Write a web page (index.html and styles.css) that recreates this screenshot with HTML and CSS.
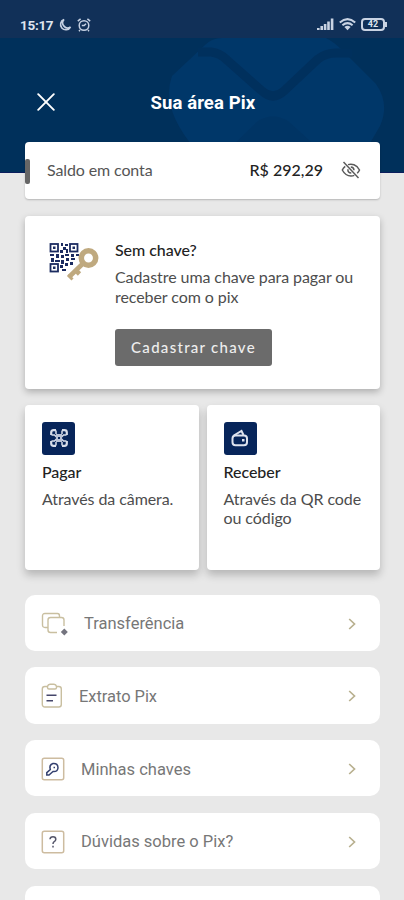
FILE: index.html
```html
<!DOCTYPE html>
<html lang="pt-BR">
    <head>
        <meta charset="utf-8">
        <title>Sua área Pix</title>
        <link rel="stylesheet" href="styles.css">
    </head>
    <body>
        <div class="top">
            <svg class="marca" width="404" height="150" viewBox="0 0 404 150">
                <path d="M172 76 L205 45 Q212 38 222 38 H326 Q334 42 342 50 L352 60 L376 84 Q390 104 380 126 L366 150 H196 Q160 108 172 76Z" fill="#003769"/>
                <path d="M198 52 H211 Q220 53 227 60 L262 91 Q273 101 284 91 L318 59 Q326 53 336 53 H352" fill="none" stroke="#00305d" stroke-width="9"/>
                <path d="M228 150 L258 121 Q273 112 288 121 L320 150Z" fill="#003464"/>
            </svg>
            <div class="status">
                <span class="hora">15:17</span>
                <svg width="14" height="14" viewBox="0 0 14 14" fill="none" stroke="#c5d0e2" stroke-width="1.6">
                    <path d="M6 1.5 A5.3 5.3 0 1 0 12.5 9 A5 5 0 0 1 6 1.5Z"/>
                </svg>
                <svg class="alarme" width="14" height="14" viewBox="0 0 14 14" fill="none" stroke="#c5d0e2" stroke-width="1.5">
                    <circle cx="7" cy="7.5" r="4.8"/>
                    <path d="M.8 3.2 L3.6 .9 M13.2 3.2 L10.4 .9 M4.8 7.5 H7.2 L9 5.8 M3 12 L2 13.2 M11 12 L12 13.2"/>
                </svg>
                <div class="sinais">
                    <svg width="17" height="13" viewBox="0 0 17 13" fill="#c9d3e3">
                        <path d="M0 10h2.6v2H0z M3.4 8h2.6v4H3.4z M6.8 6h2.6v6H6.8z M10.2 3.5h2.6v8.5h-2.6z M13.8 .5h2.6v11.5h-2.6z"/>
                    </svg>
                    <svg width="17" height="13" viewBox="0 0 17 13" fill="none" stroke="#c9d3e3" stroke-width="2">
                        <path d="M.8 4.4 Q8.5 -2.2 16.2 4.4 M3.4 7.2 Q8.5 3 13.6 7.2"/>
                        <path d="M5.4 9 Q8.5 6.5 11.6 9 L8.5 12.3Z" fill="#c9d3e3" stroke="none"/>
                    </svg>
                    <div class="bateria">42</div>
                </div>
            </div>
            <div class="titulo">
                <svg width="18" height="18" viewBox="0 0 18 18" fill="none" stroke="#fff" stroke-width="1.9" stroke-linecap="round">
                    <path d="M1.2 1.2 L16.8 16.8 M16.8 1.2 L1.2 16.8"/>
                </svg>
                <h1>Sua área Pix</h1>
            </div>
        </div>
        <div class="content">
            <div class="card saldo">
                <span class="label">Saldo em conta</span>
                <b class="valor">R$ 292,29</b>
                <svg width="20" height="18" viewBox="0 0 20 18" fill="none" stroke="#5a5a5a" stroke-width="1.5">
                    <path d="M2.5 1 L17.5 17"/>
                    <path d="M7 3.6 Q10 2.7 13 3.7 Q16.5 5 18.5 9 Q17.8 10.8 16.2 12.3 M4.2 5.3 Q2.4 6.8 1.3 9 Q4.5 15 10 15 Q11.800 15 13.3 14.4"/>
                    <path d="M9.8 6 Q12.8 6.2 13 9.3 M6.9 8.2 Q6.6 11.8 10.3 12"/>
                </svg>
            </div>
            <div class="card chave">
                <svg width="50" height="40" viewBox="0 0 50 40">
                    <g fill="none" stroke="#1b2b60" stroke-width="1.8">
                        <rect x="1.5" y="3" width="7.500" height="7.500"/>
                        <rect x="21" y="3" width="7.500" height="7.500"/>
                        <rect x="1.500" y="23" width="7.500" height="7.500"/>
                    </g>
                    <g fill="#1b2b60">
                        <path d="M4 5.500h2.500v2.500H4z M23.500 5.500h2.500v2.500h-2.500z M4 25.500h2.500v2.500H4z"/>
                        <path d="M12 2h2v3h-2z M16 3h3v2h-3z M14 6h3v3h-3z M11 9h3v3h-3z M17 8h2v4h-2z M1 13h4v2H1z M7 13h3v4H7z M12 14h3v3h-3z M16 13h4v2h-4z M22 13h3v3h-3z M27 13h3v2h-3z M2 17h3v4H2z M6 19h5v2H6z M12 19h3v4h-3z M17 17h3v3h-3z M22 17h4v2h-4z M11 24h3v3h-3z M16 22h3v3h-3z M21 21h3v3h-3z M13 28h4v2h-4z"/>
                    </g>
                    <path d="M36 21 L20 36" stroke="#fff" stroke-width="8"/>
                    <circle cx="39.500" cy="17" r="7.200" fill="#fff" stroke="#bfa97f" stroke-width="5.500"/>
                    <path d="M35 21.500 L20 36 M26.500 29 L30.500 33" fill="none" stroke="#bfa97f" stroke-width="4.600"/>
                    <path d="M19 34 L23.500 38.500" stroke="#bfa97f" stroke-width="3"/>
                </svg>
                <div class="texto">
                    <h2>Sem chave?</h2>
                    <p>Cadastre uma chave para pagar ou<br>receber com o pix</p>
                    <button>Cadastrar chave</button>
                </div>
            </div>
            <div class="dupla">
                <div class="card opcao">
                    <div class="icone">
                        <svg width="18" height="18" viewBox="0 0 18 18" fill="none" stroke="#d9deea" stroke-width="2.200">
                            <path d="M1.200 6 V3.500 Q1.200 1.200 3.500 1.200 H6 M12 1.200 H14.500 Q16.800 1.200 16.800 3.500 V6 M16.800 12 V14.500 Q16.800 16.800 14.500 16.800 H12 M6 16.800 H3.500 Q1.200 16.800 1.200 14.500 V12"/>
                            <path d="M1.500 6 H4.500 L6.500 8 M16.500 6 H13.500 L11.500 8 M1.500 12 H4.500 L6.500 10 M16.500 12 H13.500 L11.500 10 M6 1.500 V5 M12 1.500 V5 M6 16.500 V13 M12 16.500 V13" stroke-width="1.500"/>
                            <path d="M6 5h6v8H6z" fill="#b9c2d6" stroke="none"/>
                            <path d="M8 8h2v2H8z" fill="#07255a" stroke="none"/>
                        </svg>
                    </div>
                    <h2>Pagar</h2>
                    <p>Através da câmera.</p>
                </div>
                <div class="card opcao">
                    <div class="icone">
                        <svg width="18" height="18" viewBox="0 0 18 18" fill="none" stroke="#dfe3ee" stroke-width="2">
                            <rect x="1.500" y="6.500" width="14.500" height="9.800" rx="3"/>
                            <path d="M2.800 6.500 L10.500 2 L12.500 6"/>
                            <path d="M11 10h2.500v2.500H11z" fill="#dfe3ee" stroke="none"/>
                        </svg>
                    </div>
                    <h2>Receber</h2>
                    <p>Através da QR code<br>ou código</p>
                </div>
            </div>
            <ul class="lista">
                <li>
                    <svg width="28" height="24" viewBox="0 0 28 24" fill="none" stroke="#c9bfa0" stroke-width="1.400">
                        <path d="M7 15.500 H4 Q1.500 15.500 1.500 13 V4 Q1.500 1.500 4 1.500 H16.500 Q18.500 1.500 18.500 4 V5.500"/>
                        <path d="M16 20.500 H9.500 Q7 20.500 7 18 V8 Q7 5.500 9.500 5.500 H20.500 Q23 5.500 23 8 V14"/>
                        <path d="M23.300 16.500 L26.800 20 L23.300 23.500 L19.800 20Z" fill="#74747f" stroke="none"/>
                    </svg>
                    <span class="t1">Transferência</span>
                    <svg class="seta" width="8" height="12" viewBox="0 0 8 12"><path d="M1.200 1 L6.500 6 L1.200 11"/></svg>
                </li>
                <li>
                    <svg width="22" height="26" viewBox="0 0 22 26" fill="none" stroke="#c9bfa0" stroke-width="1.400">
                        <rect x="1.300" y="3.500" width="19" height="20.500" rx="2.500"/>
                        <path d="M6.500 3.500 Q7 1.300 9 1.300 H13 Q15 1.300 15.500 3.500 V4.500 Q15.500 6 14 6 H8 Q6.500 6 6.500 4.500Z" fill="#fff"/>
                        <path d="M5.500 12.300 H15.500 M5.500 17.700 H12" stroke="#45466a" stroke-width="1.600"/>
                    </svg>
                    <span class="t2">Extrato Pix</span>
                    <svg class="seta" width="8" height="12" viewBox="0 0 8 12"><path d="M1.200 1 L6.500 6 L1.200 11"/></svg>
                </li>
                <li>
                    <svg width="24" height="24" viewBox="0 0 24 24" fill="none" stroke="#cdbca0" stroke-width="1.500">
                        <rect x="1.300" y="1.300" width="21.400" height="21.400" rx="2"/>
                        <g stroke="#34406f">
                            <path d="M9.300 12.500 Q7.800 8 12 6.500 Q17 6 17 11 Q16.500 15 12 14.500 L8 18 H5.800 V15.700Z"/>
                            <path d="M12.500 9.800h1.500v1.500h-1.500z" fill="#34406f" stroke="none"/>
                        </g>
                    </svg>
                    <span class="t3">Minhas chaves</span>
                    <svg class="seta" width="8" height="12" viewBox="0 0 8 12"><path d="M1.200 1 L6.500 6 L1.200 11"/></svg>
                </li>
                <li>
                    <svg width="24" height="24" viewBox="0 0 24 24" fill="none" stroke="#cdbca0" stroke-width="1.500">
                        <rect x="1.300" y="1.300" width="21.400" height="21.400" rx="2"/>
                        <path d="M9 9.200 Q9.200 6.800 12 6.800 Q14.800 6.800 14.800 9.200 Q14.800 10.800 13.200 11.600 Q12 12.300 12 14 M12 15.800 V17.600" stroke="#55566a"/>
                    </svg>
                    <span class="t4">Dúvidas sobre o Pix?</span>
                    <svg class="seta" width="8" height="12" viewBox="0 0 8 12"><path d="M1.200 1 L6.500 6 L1.200 11"/></svg>
                </li>
                <li class="corte"></li>
            </ul>
        </div>
    </body>
</html>
```
FILE: styles.css
```css
*{
    box-sizing: border-box;
}
body{
    margin: 0;
    height: 900px;
    overflow: hidden;
    background: #e8e8e8;
    font-family: Lato, "Liberation Sans", sans-serif;
    color: #222;
}
svg{
    display: block;
    flex: none;
}
h1, h2, p, ul{
    margin: 0;
    padding: 0;
}
.top{
    position: relative;
    height: 173px;
    background: #00305b;
    border-bottom: 1px solid #0b1d5c;
}
/* marca d'agua atras do titulo */
.marca{
    position: absolute;
    top: 0;
    left: 0;
}
.status{
    position: relative;
    display: flex;
    align-items: center;
    height: 38px;
    padding: 11px 17px 0 20px;
    background: rgba(18, 48, 89, 0.95);
    color: #dfe5ef;
}
.hora{
    width: 33px;
    margin-right: 5px;
    font: bold 13.5px Roboto, sans-serif;
    letter-spacing: -0.3px;
    white-space: nowrap;
}
.alarme{
    margin-left: 5px;
}
.sinais{
    display: flex;
    align-items: center;
    gap: 5px;
    margin-left: auto;
}
.bateria{
    position: relative;
    width: 24px;
    height: 13px;
    margin-right: 2px;
    border: 2px solid #c9d3e3;
    border-radius: 4px;
    font: bold 9px/9px Roboto, sans-serif;
    text-align: center;
}
.bateria::after{
    content: "";
    position: absolute;
    right: -4px;
    top: 2px;
    width: 2px;
    height: 5px;
    background: #c9d3e3;
}
.titulo{
    position: relative;
    display: flex;
    align-items: center;
    height: 30px;
    margin-top: 49px;
    padding-left: 37px;
}
.titulo h1{
    margin: 2px 0 0 95.5px;
    color: #fff;
    font: bold 18.5px Roboto, sans-serif;
    letter-spacing: 0.1px;
    white-space: nowrap;
}
.content{
    position: relative;
    margin-top: -31.5px;
    padding: 0 24px 0 25px;
}
.card{
    background: #fff;
    border-radius: 4px;
    box-shadow: 0 3px 7px rgba(0, 0, 0, 0.25);
}
.saldo{
    position: relative;
    display: flex;
    align-items: center;
    height: 57.5px;
    padding: 0 19px 0 22px;
    font-size: 16px;
    box-shadow: 0 1px 2px rgba(0, 0, 0, 0.22);
}
.saldo::before{
    content: "";
    position: absolute;
    left: 0;
    top: 17px;
    width: 5px;
    height: 25px;
    background: #666;
    border-radius: 2px;
}
.label{
    margin-top: -2px;
    color: #555;
    letter-spacing: -0.12px;
}
.valor{
    margin: -2px 18px 0 auto;
    font-weight: 500;
}
.chave{
    display: flex;
    height: 172.5px;
    margin-top: 17px;
    padding: 25px 0 0 24px;
}
h2{
    color: #222;
    font-size: 16px;
    font-weight: 500;
    line-height: 19px;
    letter-spacing: -0.05px;
    white-space: nowrap;
}
p{
    color: #4d4d4d;
    font-size: 16px;
    line-height: 19.5px;
    letter-spacing: -0.08px;
    white-space: nowrap;
}
.texto{
    margin: -1px 0 0 16px;
}
.texto p{
    margin-top: 8px;
}
button{
    display: block;
    width: 157px;
    height: 37px;
    margin-top: 23px;
    padding: 0 0 2px;
    border: none;
    border-radius: 3px;
    background: #6b6b6b;
    color: #eee;
    font: 500 15px Lato, sans-serif;
    letter-spacing: 1.28px;
    white-space: nowrap;
}
.dupla{
    display: flex;
    gap: 8px;
    margin-top: 16px;
}
.opcao{
    flex: 1;
    height: 165.5px;
    padding: 17px 0 0 17px;
    box-shadow: 0 5px 8px rgba(0, 0, 0, 0.22);
}
.icone{
    display: flex;
    align-items: center;
    justify-content: center;
    width: 33px;
    height: 33px;
    margin-bottom: 7px;
    border-radius: 3px;
    background: #07255a;
}
.opcao p{
    margin-top: 8px;
}
.lista{
    list-style: none;
    margin-top: 24.5px;
}
.lista li{
    display: flex;
    align-items: center;
    height: 56.25px;
    margin-bottom: 16.5px;
    padding: 2px 24px 0 16px;
    border-radius: 10px;
    background: #fff;
    color: #777;
    font: 16.5px Roboto, sans-serif;
    white-space: nowrap;
}
.lista .corte{
    height: 14px;
    margin: 0;
    border-radius: 10px 10px 0 0;
}
.t1{
    margin-left: 15px;
}
.t2{
    margin-left: 16px;
    letter-spacing: -0.05px;
}
.t3, .t4{
    margin-left: 16px;
}
.seta{
    margin-left: auto;
    fill: none;
    stroke: #b8b08f;
    stroke-width: 1.7;
}
```
